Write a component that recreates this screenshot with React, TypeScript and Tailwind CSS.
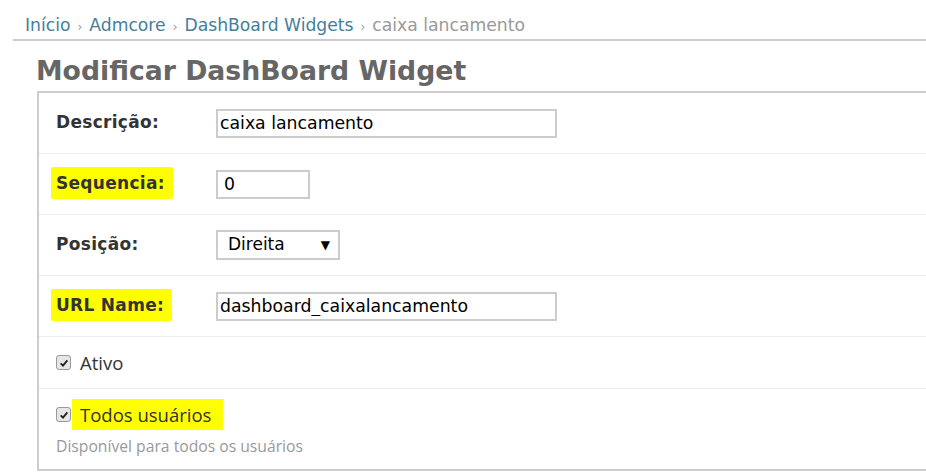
import React from "react";

function Highlight({ children }: { children: React.ReactNode }) {
  return (
    <span className="bg-[#ffff00] -ml-[5px] pl-[5px] pr-[8px] py-[6px] rounded-[2px]">
      {children}
    </span>
  );
}

function Row({
  label,
  highlight,
  children,
}: {
  label: string;
  highlight?: boolean;
  children: React.ReactNode;
}) {
  return (
    <div className="flex items-center h-[61px] border-b border-[#eee] pl-[17px]">
      <div className="w-[160px] text-[17px] tracking-[0.3px] font-bold text-[#333]">
        {highlight ? <Highlight>{label}</Highlight> : label}
      </div>
      {children}
    </div>
  );
}

function Check({ label, highlight }: { label: string; highlight?: boolean }) {
  return (
    <div className="flex items-center gap-[9px]">
      <span className="flex h-[15px] w-[15px] items-center justify-center rounded-[3px] border border-[#999] bg-[#e6e6e6]">
        <svg viewBox="0 0 12 12" className="h-[10px] w-[10px]">
          <path d="M2 6.5 L4.8 9.2 L10 2.8" fill="none" stroke="#222" strokeWidth="2.2" />
        </svg>
      </span>
      <span className="text-[18.5px] text-[#333] font-['Open_Sans',sans-serif]">
        {highlight ? (
          <span className="bg-[#ffff00] -ml-[8px] pl-[8px] pr-[12px] py-[3px]">{label}</span>
        ) : (
          label
        )}
      </span>
    </div>
  );
}

const inputCls =
  "h-[29px] border-2 border-[#ccc] px-[2px] text-[17.3px] text-[#000] outline-none";

export default function App() {
  return (
    <div className="w-[926px] h-[473px] overflow-hidden bg-white font-['DejaVu_Sans',Verdana,sans-serif]">
      {/* Breadcrumbs */}
      <div className="ml-[13px] border-b-2 border-[#ccc] pl-[12px] pt-[14px] pb-[0px] text-[17.2px] leading-[23px] text-[#999]">
        <a className="text-[#447e9b]">Início</a>
        <span className="mx-[7px] text-[12px]">›</span>
        <a className="text-[#447e9b]">Admcore</a>
        <span className="mx-[7px] text-[12px]">›</span>
        <a className="text-[#447e9b]">DashBoard Widgets</a>
        <span className="mx-[7px] text-[12px]">›</span>
        caixa lancamento
      </div>

      <h1 className="ml-[36px] mt-[13px] text-[26.7px] leading-[34px] font-bold text-[#666]">
        Modificar DashBoard Widget
      </h1>

      {/* Fieldset */}
      <div className="ml-[37px] mt-[3px] border-2 border-r-0 border-[#ccc]">
        <Row label="Descrição:">
          <input readOnly value="caixa lancamento" className={`${inputCls} w-[341px]`} />
        </Row>
        <Row label="Sequencia:" highlight>
          <input readOnly value="0" className={`${inputCls} w-[94px] px-[6px]`} />
        </Row>
        <Row label="Posição:">
          <div className="flex h-[30px] w-[124px] items-center justify-between border-2 border-[#ccc] pl-[10px] pr-[8px] text-[17px] text-[#000]">
            <span>Direita</span>
            <span className="text-[12px]">▼</span>
          </div>
        </Row>
        <Row label="URL Name:" highlight>
          <input readOnly value="dashboard_caixalancamento" className={`${inputCls} w-[341px]`} />
        </Row>
        <div className="flex h-[52px] items-center border-b border-[#eee] pl-[17px]">
          <Check label="Ativo" />
        </div>
        <div className="h-[80px] pl-[17px] pt-[12px]">
          <Check label="Todos usuários" highlight />
          <p className="mt-[6px] text-[15.7px] text-[#999] font-['Open_Sans',sans-serif]">
            Disponível para todos os usuários
          </p>
        </div>
      </div>
    </div>
  );
}
